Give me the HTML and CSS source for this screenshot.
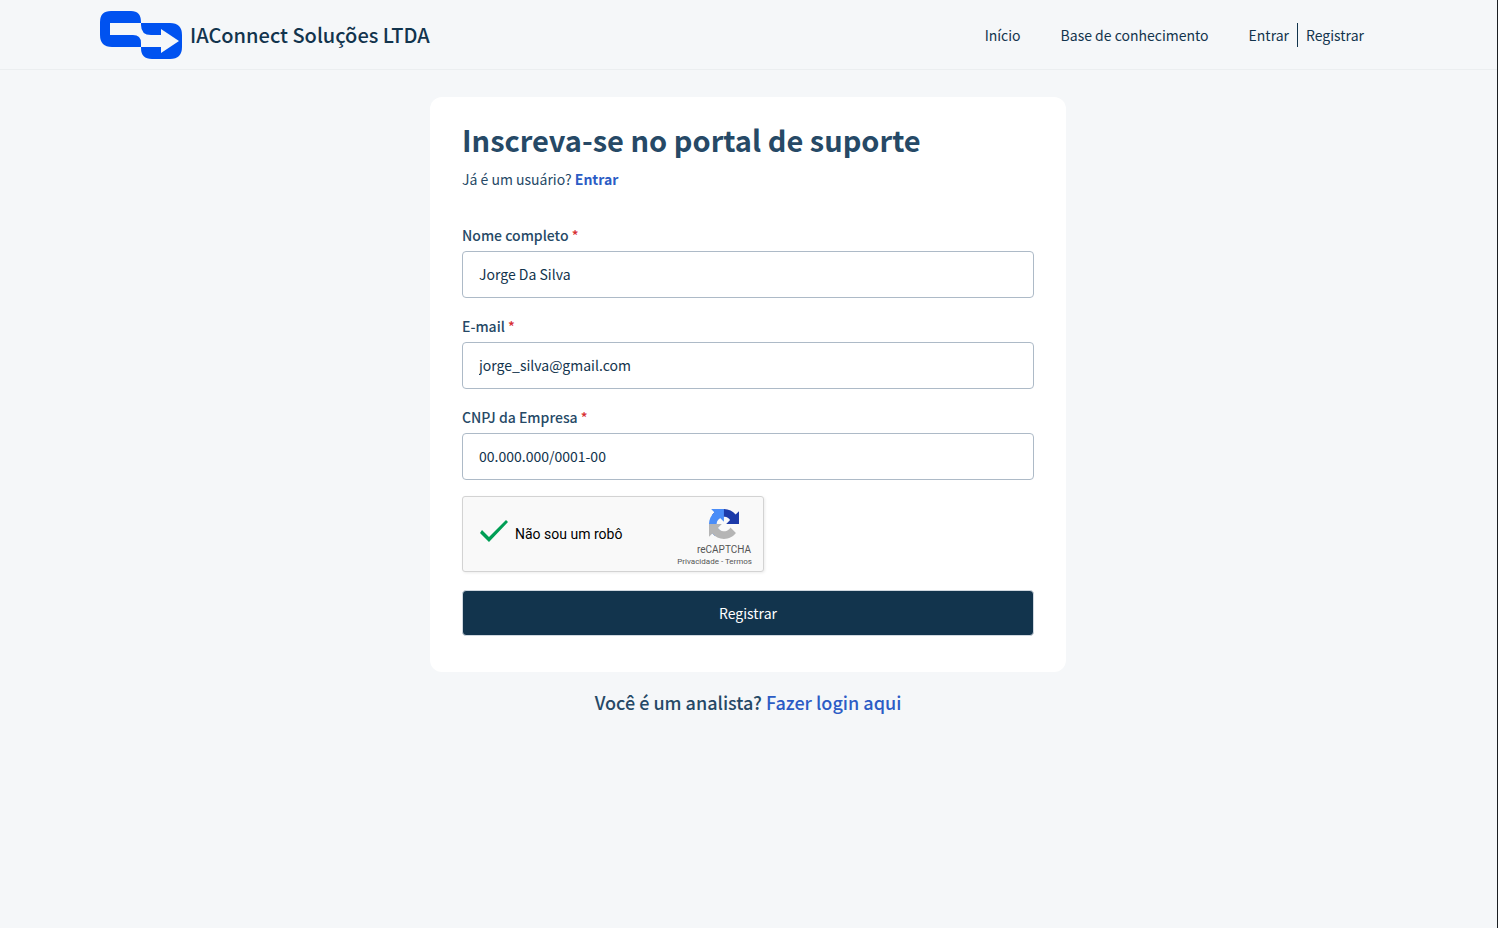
FILE: index.html
```html
<!DOCTYPE html>
<html lang="pt-BR">
<head>
    <meta charset="UTF-8">
    <meta name="viewport" content="width=device-width, initial-scale=1.0">
    <title>IAConnect Soluções LTDA</title>
    <link rel="stylesheet" href="styles.css">
</head>
<body>
    <header class="header">
        <a href="#" class="brand">
            <svg class="brand-logo" width="82" height="48" viewBox="0 0 82 48" fill="#0052f0" aria-hidden="true">
                <path d="M11 0H31Q41 0 41 11V12H10V24H33Q41 24 41 32V36H12Q0 36 0 24V11Q0 0 11 0Z"/>
                <path d="M41 12H70Q82 12 82 24V36Q82 48 70 48H52Q41 48 41 37V36H61V42L79 30L61 18V24H51Q41 24 41 14Z"/>
            </svg>
            <span>IAConnect Soluções LTDA</span>
        </a>
        <nav class="nav">
            <a href="#">Início</a>
            <a href="#">Base de conhecimento</a>
            <div class="nav-user">
                <a href="#">Entrar</a>
                <a href="#" class="nav-register">Registrar</a>
            </div>
        </nav>
    </header>

    <main class="main">
        <section class="card">
            <h1>Inscreva-se no portal de suporte</h1>
            <p class="subtitle">Já é um usuário? <a href="#">Entrar</a></p>

            <form action="#">
                <div class="field">
                    <label for="name">Nome completo <span class="required">*</span></label>
                    <input type="text" id="name" value="Jorge Da Silva">
                </div>
                <div class="field">
                    <label for="email">E-mail <span class="required">*</span></label>
                    <input type="email" id="email" value="jorge_silva@gmail.com">
                </div>
                <div class="field">
                    <label for="cnpj">CNPJ da Empresa <span class="required">*</span></label>
                    <input type="text" id="cnpj" value="00.000.000/0001-00">
                </div>

                <div class="captcha">
                    <input type="checkbox" id="robot" class="captcha-check" checked>
                    <label for="robot" class="captcha-label">Não sou um robô</label>
                    <div class="captcha-brand">
                        <svg width="30" height="30" viewBox="0 0 64 64" aria-hidden="true">
                            <path fill="#1c3aa9" d="M64 31.955l-.033-1.37V4.687l-7.16 7.16C50.948 4.674 42.033.093 32.05.093c-10.4 0-19.622 4.96-25.458 12.64l11.736 11.86a15.55 15.55 0 0 1 4.754-5.334c2.05-1.6 4.952-2.906 8.968-2.906.485 0 .86.057 1.135.163 4.976.393 9.288 3.14 11.828 7.124l-8.307 8.307L64 31.953"/>
                            <path fill="#4a8df8" d="M31.862.094l-1.37.033H4.594l7.16 7.16C4.58 13.147 0 22.06 0 32.046c0 10.4 4.96 19.622 12.64 25.458L24.5 45.768a15.55 15.55 0 0 1-5.334-4.754c-1.6-2.05-2.906-4.952-2.906-8.968 0-.485.057-.86.163-1.135.393-4.976 3.14-9.288 7.124-11.828l8.307 8.307L31.86.095"/>
                            <path fill="#b5b5b5" d="M.001 32.045l.033 1.37v25.898l7.16-7.16c5.86 7.173 14.774 11.754 24.76 11.754 10.4 0 19.622-4.96 25.458-12.64l-11.736-11.86a15.55 15.55 0 0 1-4.754 5.334c-2.05 1.6-4.952 2.906-8.968 2.906-.485 0-.86-.057-1.135-.163-4.976-.393-9.288-3.14-11.828-7.124l8.307-8.307c-10.522.04-22.4.066-27.295-.005"/>
                        </svg>
                        <span class="captcha-name">reCAPTCHA</span>
                        <div class="captcha-links">
                            <a href="#">Privacidade</a> - <a href="#">Termos</a>
                        </div>
                    </div>
                </div>

                <button type="submit" class="submit">Registrar</button>
            </form>
        </section>

        <p class="analyst">Você é um analista? <a href="#">Fazer login aqui</a></p>
    </main>
</body>
</html>
```
FILE: styles.css
```css
* {
    box-sizing: border-box;
}

body {
    margin: 0;
    min-height: 100vh;
    border-right: 1px solid #1b1f22;
    background-color: #f5f7f9;
    color: #264966;
    font-family: "Noto Sans CJK SC", "Noto Sans", sans-serif;
    font-size: 14px;
    line-height: 24px;
}

a {
    color: #2c5cc5;
    text-decoration: none;
}

.header {
    display: flex;
    justify-content: space-between;
    align-items: center;
    height: 70px;
    padding: 0 133px 0 100px;
    border-bottom: 1px solid #ebeef0;
}

.brand {
    display: flex;
    align-items: center;
    gap: 8px;
    color: #12344d;
    font-size: 20px;
    font-weight: 500;
}

.nav {
    display: flex;
    gap: 40px;
}

.nav a {
    color: #12344d;
}

.nav-user {
    display: flex;
    gap: 8px;
}

.nav-register {
    padding-left: 8px;
    border-left: 1px solid #12344d;
}

.main {
    padding: 27px 17px 27px 16px;
}

.card {
    max-width: 636px;
    margin: 0 auto;
    padding: 22px 32px 36px;
    border-radius: 12px;
    background-color: #fff;
}

h1 {
    margin: 0;
    font-size: 29px;
    font-weight: 700;
    line-height: 40px;
}

.subtitle {
    margin: 8px 0 32px;
}

.subtitle a {
    font-weight: 700;
}

.field {
    margin-bottom: 16px;
}

.field label {
    display: block;
    margin-bottom: 4px;
    font-weight: 500;
}

.required {
    color: #d72d30;
}

.field input {
    display: block;
    width: 100%;
    height: 47px;
    padding: 0 16px 2px;
    border: 1px solid #adbac7;
    border-radius: 4px;
    background-color: #fff;
    color: #12344d;
    font: inherit;
}

.captcha {
    display: flex;
    align-items: center;
    width: 302px;
    height: 76px;
    padding: 0 11px 0 17px;
    border: 1px solid #d3d3d3;
    border-radius: 3px;
    background-color: #f9f9f9;
    box-shadow: 1px 1px 3px rgba(0, 0, 0, 0.08);
    font-family: Roboto, sans-serif;
}

/* the tick itself, cut out of the checkbox */
.captcha-check {
    appearance: none;
    width: 28px;
    height: 22px;
    margin: 0 7px 6px 0;
}

.captcha-check:checked {
    background-color: #009e55;
    clip-path: polygon(0 13px, 2px 10px, 9px 17px, 26px 0, 28px 2px, 9px 22px);
}

.captcha-label {
    flex: 1;
    color: #000;
    font-size: 14px;
}

.captcha-brand {
    display: flex;
    flex-direction: column;
    align-items: flex-end;
    color: #555;
}

.captcha-brand svg {
    margin: 7px 13px 4px 0;
}

.captcha-name {
    margin-right: 1px;
    font-size: 10px;
    line-height: 14px;
}

.captcha-links {
    font-size: 8px;
    line-height: 10px;
}

.captcha-links a {
    color: #555;
}

.submit {
    display: block;
    width: 100%;
    height: 46px;
    margin-top: 18px;
    border: 1px solid #cfd7df;
    border-radius: 4px;
    background-color: #12344d;
    color: #fff;
    font: inherit;
    cursor: pointer;
}

.analyst {
    margin: 15px 0 0;
    font-size: 18px;
    font-weight: 500;
    line-height: 30px;
    text-align: center;
}
```
